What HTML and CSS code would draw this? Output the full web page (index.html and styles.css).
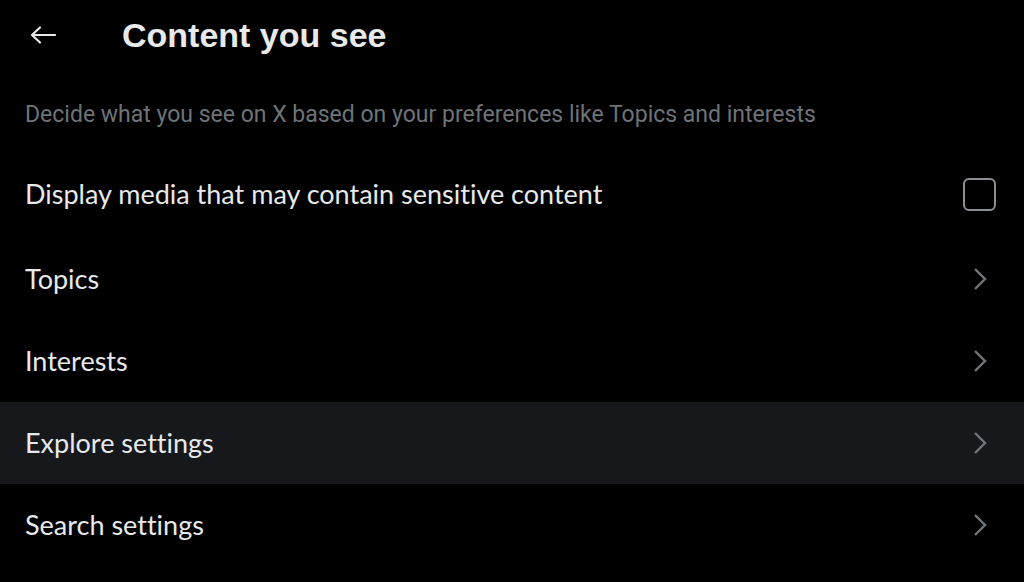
FILE: index.html
```html
<!DOCTYPE html>
<html>
<head>
<meta charset="utf-8">
<link rel="stylesheet" href="styles.css">
</head>
<body>
<div class="page">
  <header class="header">
    <div class="back">
      <svg width="26" height="18" viewBox="0 0 26 18"><path d="M25 9H2M10 1.5L2 9l8 7.5" fill="none" stroke="#e7e9ea" stroke-width="2.2" stroke-linecap="round" stroke-linejoin="round"/></svg>
    </div>
    <h1 class="title">Content you see</h1>
  </header>
  <p class="subtitle">Decide what you see on X based on your preferences like Topics and interests</p>
  <div class="row row-check">
    <span class="label">Display media that may contain sensitive content</span>
    <span class="checkbox"></span>
  </div>
  <div class="row">
    <span class="label">Topics</span>
    <svg class="chev" width="14" height="24" viewBox="0 0 14 24"><path d="M2 2l10 10L2 22" fill="none" stroke="#71767b" stroke-width="2.4"/></svg>
  </div>
  <div class="row">
    <span class="label">Interests</span>
    <svg class="chev" width="14" height="24" viewBox="0 0 14 24"><path d="M2 2l10 10L2 22" fill="none" stroke="#71767b" stroke-width="2.4"/></svg>
  </div>
  <div class="row hover">
    <span class="label">Explore settings</span>
    <svg class="chev" width="14" height="24" viewBox="0 0 14 24"><path d="M2 2l10 10L2 22" fill="none" stroke="#71767b" stroke-width="2.4"/></svg>
  </div>
  <div class="row">
    <span class="label">Search settings</span>
    <svg class="chev" width="14" height="24" viewBox="0 0 14 24"><path d="M2 2l10 10L2 22" fill="none" stroke="#71767b" stroke-width="2.4"/></svg>
  </div>
</div>
</body>
</html>
```
FILE: styles.css
```css
html, body {
  margin: 0;
  padding: 0;
  background: #000;
  height: 100%;
  overflow: hidden;
}
.page {
  width: 1024px;
  color: #e7e9ea;
}
.header {
  height: 70px;
  display: flex;
  align-items: center;
}
.back {
  width: 122px;
  padding-left: 30px;
  box-sizing: border-box;
  display: flex;
  align-items: center;
}
.title {
  margin: 0;
  font-family: "Liberation Sans", Arial, sans-serif;
  font-weight: 700;
  font-size: 34px;
  line-height: 40px;
}
.subtitle {
  margin: 33px 0 0;
  padding: 0 25px 23px;
  font-family: Roboto, "Noto Sans", sans-serif;
  font-size: 23px;
  line-height: 24px;
  color: #6e7378;
}
.row {
  height: 82px;
  display: flex;
  align-items: center;
  justify-content: space-between;
  padding: 0 37px 0 25px;
}
.row-check {
  height: 88px;
  padding-right: 28px;
}
.hover {
  background: #16181c;
}
.label {
  font-family: Lato, "Open Sans", sans-serif;
  font-size: 27px;
  line-height: 30px;
  font-variant-ligatures: none;
}
.checkbox {
  width: 29px;
  height: 29px;
  border: 2px solid #8b8f94;
  border-radius: 6px;
}
```
